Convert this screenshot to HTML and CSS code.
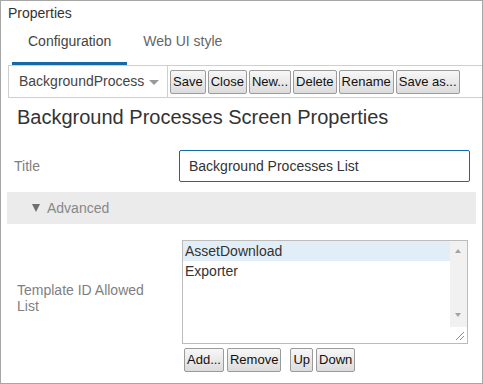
FILE: index.html
```html
<!DOCTYPE html>
<html lang="en">
<head>
  <meta charset="UTF-8">
  <title>Properties</title>
  <link rel="stylesheet" href="styles.css">
</head>
<body>
  <div class="panel">
    <div class="panel-title">Properties</div>

    <!-- Tabs -->
    <div class="tabs">
      <div class="tab active">Configuration</div>
      <div class="tab">Web UI style</div>
    </div>

    <!-- Toolbar -->
    <div class="toolbar">
      <div class="select">BackgroundProcess <span class="caret"></span></div>
      <div class="btn-group">
        <button class="btn">Save</button>
        <button class="btn">Close</button>
        <button class="btn">New...</button>
        <button class="btn">Delete</button>
        <button class="btn">Rename</button>
        <button class="btn">Save as...</button>
      </div>
    </div>

    <h2 class="screen-title">Background Processes Screen Properties</h2>

    <div class="row row-title">
      <label class="field-label">Title</label>
      <input class="text-input" type="text" value="Background Processes List">
    </div>

    <div class="section"><span class="section-arrow"></span>Advanced</div>

    <div class="row row-list">
      <label class="field-label list-label">Template ID Allowed List</label>
      <div class="list-field">
        <div class="listbox">
          <div class="list-items">
            <div class="list-item selected">AssetDownload</div>
            <div class="list-item">Exporter</div>
          </div>
          <div class="scrollbar">
            <span class="arrow-up"></span>
            <span class="arrow-down"></span>
          </div>
          <div class="resizer">
            <svg width="16" height="16" viewBox="0 0 16 16">
              <line x1="13" y1="5" x2="5" y2="13" stroke="#8a8a8a" stroke-width="1"/>
              <line x1="13" y1="9" x2="9" y2="13" stroke="#8a8a8a" stroke-width="1"/>
            </svg>
          </div>
        </div>
        <div class="btn-group list-btns">
          <button class="btn">Add...</button>
          <button class="btn">Remove</button>
          <button class="btn btn-up">Up</button>
          <button class="btn">Down</button>
        </div>
      </div>
    </div>
  </div>
</body>
</html>
```

FILE: styles.css
```css
body {
  margin: 0;
  font-family: "Liberation Sans", Arial, sans-serif;
  color: #333;
  background: #fff;
}

.panel {
  width: 483px;
  height: 384px;
  box-sizing: border-box;
  border: 1px solid #a6a6a6;
  overflow: hidden;
}

.panel-title {
  font-size: 14px;
  line-height: 16px;
  padding: 4px 0 0 7px;
  color: #333;
}

/* Tabs */
.tabs {
  display: flex;
  margin-left: 11px;
}

.tab {
  font-size: 14px;
  line-height: 16px;
  padding: 12px 16px 13px;
  border-bottom: 3px solid transparent;
  color: #666;
}

.tab.active {
  color: #444;
  border-bottom-color: #1768a6;
}

/* Toolbar */
.toolbar {
  display: flex;
  align-items: center;
  margin-left: 7px;
  height: 33px;
  box-sizing: border-box;
  border-top: 1px solid #cfcfcf;
  border-bottom: 1px solid #cfcfcf;
}

.select {
  align-self: stretch;
  width: 160px;
  box-sizing: border-box;
  border-left: 1px solid #cfcfcf;
  border-right: 1px solid #cfcfcf;
  padding-left: 10px;
  font-size: 14px;
  line-height: 31px;
  color: #444;
  display: flex;
  align-items: center;
}

.caret {
  display: inline-block;
  margin-left: 5px;
  margin-top: 2px;
  border-left: 5px solid transparent;
  border-right: 5px solid transparent;
  border-top: 5px solid #9a9a9a;
}

.btn-group {
  display: flex;
  gap: 2px;
  margin-left: 2px;
}

.btn {
  font-family: "Liberation Sans", Arial, sans-serif;
  font-size: 13px;
  line-height: 16px;
  padding: 3px 2px;
  margin: 0;
  border: 1px solid #9b9b9b;
  border-radius: 2px;
  background: linear-gradient(#f7f7f7, #dcdcdc);
  color: #111;
}

.screen-title {
  margin: 7px 0 0 16px;
  font-size: 20px;
  line-height: 24px;
  font-weight: normal;
  color: #333;
}

/* Form rows */
.row {
  display: flex;
}

.row-title {
  margin-top: 21px;
  padding-left: 13px;
  align-items: center;
}

.field-label {
  font-size: 14px;
  line-height: 16px;
  color: #808080;
}

.row-title .field-label {
  width: 165px;
}

.text-input {
  width: 291px;
  height: 32px;
  box-sizing: border-box;
  margin: 0;
  border: 1px solid #1768a6;
  border-radius: 2px;
  padding: 0 9px;
  font-family: "Liberation Sans", Arial, sans-serif;
  font-size: 14px;
  color: #333;
  outline: none;
}

.section {
  margin: 10px 0 0 6px;
  width: 469px;
  height: 32px;
  background: #ebebeb;
  display: flex;
  align-items: center;
  padding-left: 25px;
  box-sizing: border-box;
  font-size: 14px;
  color: #888;
}

.section-arrow {
  display: inline-block;
  border-left: 4.5px solid transparent;
  border-right: 4.5px solid transparent;
  border-top: 8px solid #6f6f6f;
  margin-right: 7px;
}

.row-list {
  margin-top: 16px;
  padding-left: 16px;
}

.list-label {
  width: 140px;
  margin: 42px 25px 0 0;
}

.listbox {
  position: relative;
  display: flex;
  width: 286px;
  height: 104px;
  box-sizing: border-box;
  border: 1px solid #bcbcbc;
}

.list-items {
  flex: 1;
}

.list-item {
  font-size: 14px;
  line-height: 20px;
  padding-left: 2px;
  color: #333;
}

.list-item.selected {
  background: #e1eef8;
}

.scrollbar {
  width: 17px;
  height: 86px;
  background: #f1f1f1;
  position: relative;
}

.arrow-up,
.arrow-down {
  position: absolute;
  left: 5px;
  border-left: 3.5px solid transparent;
  border-right: 3.5px solid transparent;
}

.arrow-up {
  top: 8px;
  border-bottom: 4px solid #a3a3a3;
}

.arrow-down {
  top: 72px;
  border-top: 4px solid #a3a3a3;
}

.resizer {
  position: absolute;
  right: 0;
  bottom: 0;
  width: 16px;
  height: 16px;
  background: #fff;
}

.resizer svg {
  display: block;
}

.list-btns {
  margin-top: 4px;
  gap: 3px;
}

.btn-up {
  margin-left: 6px;
}
```
